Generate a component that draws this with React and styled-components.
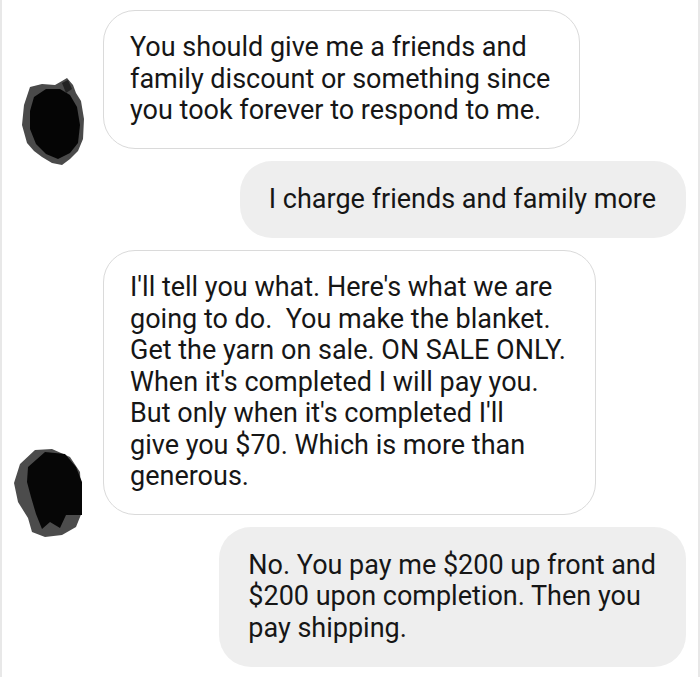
import React from "react";
import styled, { createGlobalStyle } from "styled-components";

const GlobalStyle = createGlobalStyle`
    html, body {
        margin: 0;
        padding: 0;
        background: #fff;
    }
    body {
        font-family: Roboto, "Noto Sans", "Liberation Sans", sans-serif;
        -webkit-font-smoothing: antialiased;
    }
`;

const Frame = styled.div`
    box-sizing: border-box;
    width: 700px;
    height: 677px;
    overflow: hidden;
    border-left: 2px solid #e8e8e8;
    border-right: 2px solid #e8e8e8;
    padding: 10px 12px 0 0;
    display: flex;
    flex-direction: column;
    gap: 12px;
`;

const Row = styled.div`
    display: flex;
    align-items: flex-end;
    justify-content: ${(p) => (p.$mine ? "flex-end" : "flex-start")};
`;

const AvatarBox = styled.div`
    flex: 0 0 101px;
    height: 100px;
    margin-bottom: -22px;
    svg {
        display: block;
    }
`;

const Bubble = styled.div`
    box-sizing: border-box;
    width: fit-content;
    min-width: ${(p) => (p.$empty ? "380px" : "0")};
    min-height: ${(p) => (p.$empty ? "120px" : "0")};
    padding: ${(p) => (p.$mine ? "23px 30px 23px 29px" : "21px 29px 21px 26px")};
    border-radius: 32px;
    background: ${(p) => (p.$mine ? "#eeeeee" : "#fff")};
    border: ${(p) => (p.$mine ? "none" : "1.5px solid #dadada")};
    color: #161616;
    font-size: 27px;
    line-height: 31.5px;
    white-space: pre;
`;

const Avatar = ({ shape, offsetY }) => (
    <AvatarBox>
        <svg width="101" height="100" viewBox="0 0 101 100">
            <g transform={`translate(-2,${-offsetY})`}>{shape}</g>
        </svg>
    </AvatarBox>
);

const blobOne = (
    <>
        <polygon
            fill="#4a4a4a"
            points="30,86 42,83 55,84 62,80 67,77 73,84 76,92 81,100 84,118 83,138 78,150 70,158 62,164 52,162 42,156 34,150 27,142 22,124 24,104"
        />
        <polygon
            fill="#050505"
            points="34,96 46,88 60,88 70,94 77,106 80,124 78,142 70,152 58,158 46,153 36,143 30,128 30,110"
        />
        <polygon fill="#222" points="62,82 68,79 72,88 66,92" />
    </>
);

const blobTwo = (
    <>
        <polygon
            fill="#4c4c4c"
            points="20,462 35,448 52,447 70,455 80,470 82,510 76,525 62,533 45,535 32,530 28,516 18,500 14,481"
        />
        <polygon
            fill="#060606"
            points="28,465 45,450 65,452 76,465 82,480 82,513 66,513 60,526 50,520 42,527 36,512 31,495 27,480"
        />
    </>
);

const messages = [
    {
        mine: false,
        avatar: { shape: blobOne, offsetY: 70 },
        lines: [
            "You should give me a friends and",
            "family discount or something since",
            "you took forever to respond to me.",
        ],
    },
    { mine: true, lines: ["I charge friends and family more"] },
    {
        mine: false,
        avatar: { shape: blobTwo, offsetY: 435 },
        lines: [
            "I'll tell you what. Here's what we are",
            "going to do.  You make the blanket.",
            "Get the yarn on sale. ON SALE ONLY.",
            "When it's completed I will pay you.",
            "But only when it's completed I'll",
            "give you $70. Which is more than",
            "generous.",
        ],
    },
    {
        mine: true,
        lines: [
            "No. You pay me $200 up front and",
            "$200 upon completion. Then you",
            "pay shipping.",
        ],
    },
    { mine: false, avatar: null, lines: [] },
];

const App = () => (
    <>
        <GlobalStyle />
        <Frame>
            {messages.map((m, i) => (
                <Row key={i} $mine={m.mine}>
                    {!m.mine &&
                        (m.avatar ? (
                            <Avatar shape={m.avatar.shape} offsetY={m.avatar.offsetY} />
                        ) : (
                            <AvatarBox />
                        ))}
                    <Bubble $mine={m.mine} $empty={m.lines.length === 0}>
                        {m.lines.join("\n")}
                    </Bubble>
                </Row>
            ))}
        </Frame>
    </>
);

export default App;
